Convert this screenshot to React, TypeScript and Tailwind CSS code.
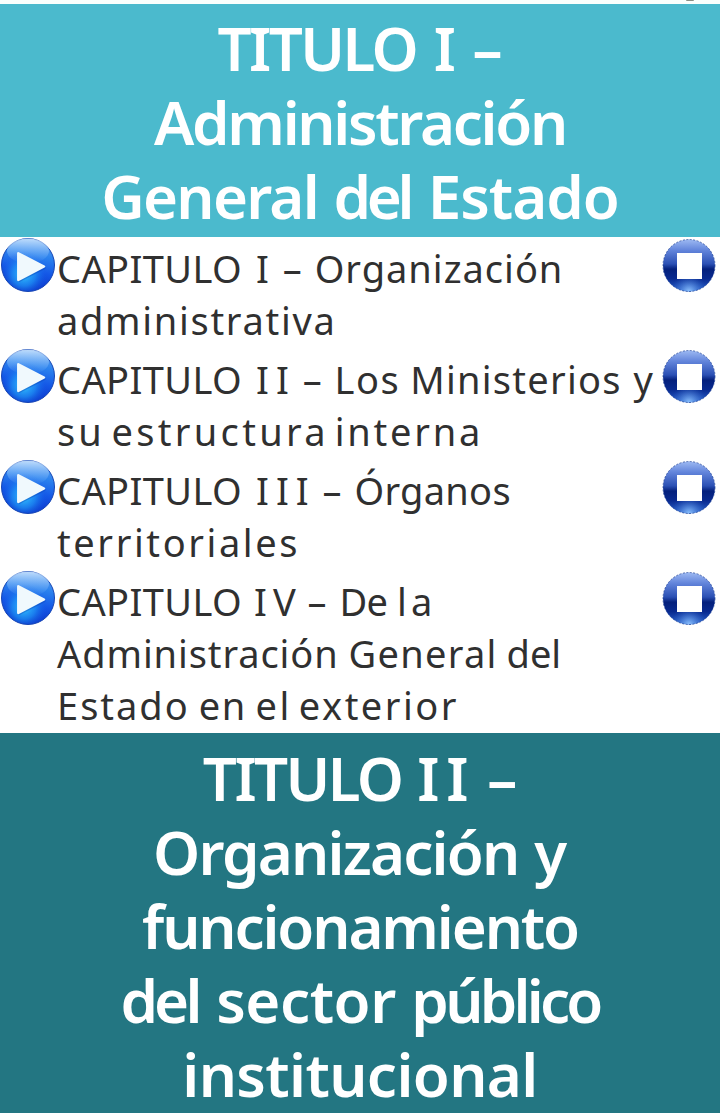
interface Word {
  text: string
  className?: string
}

type Line = Word[]

const titleOne: Line[] = [
  [
    { text: 'TITULO', className: 'tracking-[-2.57px]' },
    { text: 'I', className: 'ml-0.5' },
    { text: '–', className: 'ml-px' },
  ],
  [{ text: 'Administración', className: 'tracking-[-2.29px]' }],
  [
    { text: 'General', className: 'tracking-[-1.75px]' },
    { text: 'del', className: 'tracking-[-4.33px]' },
    { text: 'Estado', className: 'ml-0.5 tracking-[-1.02px]' },
  ],
]

const titleTwo: Line[] = [
  [
    { text: 'TITULO', className: 'tracking-[-2.57px]' },
    { text: 'II', className: 'tracking-[7px]' },
    { text: '–', className: '-ml-[4px]' },
  ],
  [
    { text: 'Organización', className: 'tracking-[-1.8px]' },
    { text: 'y' },
  ],
  [{ text: 'funcionamiento', className: 'tracking-[-2.13px]' }],
  [
    { text: 'del', className: 'tracking-[-3.83px]' },
    { text: 'sector', className: 'ml-0.5 tracking-[-0.44px]' },
    { text: 'público', className: 'tracking-[-3.75px]' },
  ],
  [{ text: 'institucional', className: 'tracking-[-0.6px]' }],
]

const chapters: Line[][] = [
  [
    [
      { text: 'CAPITULO', className: 'tracking-[0.4px]' },
      { text: 'I', className: 'ml-1' },
      { text: '–', className: 'ml-1' },
      { text: 'Organización', className: 'ml-[3px] tracking-[1px]' },
    ],
    [{ text: 'administrativa', className: 'tracking-[1.7px]' }],
  ],
  [
    [
      { text: 'CAPITULO', className: 'tracking-[0.4px]' },
      { text: 'II', className: 'ml-1 tracking-[7px]' },
      { text: '–', className: '-ml-[3px]' },
      { text: 'Los', className: 'ml-[3px] tracking-[1.55px]' },
      { text: 'Ministerios', className: 'tracking-[1.26px]' },
      { text: 'y', className: 'ml-0.5' },
    ],
    [
      { text: 'su', className: 'tracking-[3px]' },
      { text: 'estructura', className: '-ml-[3px] tracking-[3.3px]' },
      { text: 'interna', className: '-ml-[4px] tracking-[2.8px]' },
    ],
  ],
  [
    [
      { text: 'CAPITULO', className: 'tracking-[0.4px]' },
      { text: 'III', className: 'ml-1 tracking-[7px]' },
      { text: '–', className: '-ml-[3px]' },
      { text: 'Órganos', className: 'ml-[3px] tracking-[0.3px]' },
    ],
    [{ text: 'territoriales', className: 'tracking-[2.6px]' }],
  ],
  [
    [
      { text: 'CAPITULO', className: 'tracking-[0.4px]' },
      { text: 'IV', className: 'ml-0.5 tracking-[6px]' },
      { text: '–', className: '-ml-1' },
      { text: 'De', className: 'ml-[3px] tracking-[-0.74px]' },
      { text: 'la', className: 'tracking-[4px]' },
    ],
    [
      { text: 'Administración', className: 'tracking-[0.9px]' },
      { text: 'General', className: 'tracking-[1.3px]' },
      { text: 'del', className: '-ml-px' },
    ],
    [
      { text: 'Estado', className: 'tracking-[2px]' },
      { text: 'en', className: '-ml-px tracking-[1.57px]' },
      { text: 'el', className: '-ml-px tracking-[2.57px]' },
      { text: 'exterior', className: '-ml-[3px] tracking-[2.5px]' },
    ],
  ],
]

function Lines({ lines }: { lines: Line[] }) {
  return (
    <>
      {lines.map((line, lineIndex) => (
        <span key={lineIndex} className="block whitespace-nowrap">
          {line.map((word, wordIndex) => (
            <span key={wordIndex}>
              {wordIndex > 0 && ' '}
              <span className={word.className}>{word.text}</span>
            </span>
          ))}
        </span>
      ))}
    </>
  )
}

function PlayIcon() {
  return (
    <svg width="56" height="56" viewBox="0 0 56 56" className="block">
      <defs>
        <linearGradient id="play-base" x1="0.6" y1="0" x2="0.4" y2="1">
          <stop offset="0" stopColor="#5f9fee" />
          <stop offset="0.3" stopColor="#2b82ee" />
          <stop offset="0.6" stopColor="#1457e6" />
          <stop offset="1" stopColor="#0a2fc4" />
        </linearGradient>
        <radialGradient id="play-glow" cx="0.42" cy="0.68" r="0.45">
          <stop offset="0" stopColor="#35c8ff" />
          <stop offset="0.5" stopColor="#1f97f8" stopOpacity="0.7" />
          <stop offset="1" stopColor="#1457e6" stopOpacity="0" />
        </radialGradient>
        <linearGradient id="play-shine" x1="0" y1="0" x2="0" y2="1">
          <stop offset="0" stopColor="#d9edff" stopOpacity="0.8" />
          <stop offset="1" stopColor="#7fbdff" stopOpacity="0" />
        </linearGradient>
      </defs>
      <circle cx="28" cy="28" r="26.5" fill="url(#play-base)" stroke="#1746b4" />
      <circle cx="28" cy="28" r="26" fill="url(#play-glow)" />
      <ellipse cx="28" cy="14" rx="21" ry="12.5" fill="url(#play-shine)" />
      <path d="M19 18 L44.5 31 L19 44 Z" fill="#0b3fb5" opacity="0.4" stroke="#0b3fb5" strokeWidth="2" strokeLinejoin="round" />
      <path d="M18.3 16.3 L44 29.5 L18.3 43 Z" fill="#f0f9fd" stroke="#f0f9fd" strokeWidth="2.5" strokeLinejoin="round" />
    </svg>
  )
}

function StopIcon() {
  return (
    <svg width="54" height="54" viewBox="0 0 54 54" className="block">
      <defs>
        <linearGradient id="stop-base" x1="0" y1="0" x2="0" y2="1">
          <stop offset="0" stopColor="#9db9f2" />
          <stop offset="0.2" stopColor="#6486dc" />
          <stop offset="0.47" stopColor="#2b50b4" />
          <stop offset="0.57" stopColor="#04207c" />
          <stop offset="0.75" stopColor="#08298f" />
          <stop offset="1" stopColor="#2a62cc" />
        </linearGradient>
        <radialGradient id="stop-glow" cx="0.5" cy="1" r="0.35">
          <stop offset="0" stopColor="#8fc4ff" />
          <stop offset="1" stopColor="#2a62cc" stopOpacity="0" />
        </radialGradient>
      </defs>
      <circle cx="27" cy="26.5" r="26" fill="url(#stop-base)" />
      <circle cx="27" cy="26.5" r="26" fill="url(#stop-glow)" />
      <circle cx="27" cy="26.5" r="26" fill="none" stroke="#1b3f94" strokeOpacity="0.7" strokeDasharray="2 1.5" />
      <rect x="15" y="14" width="25" height="26" fill="#fff" />
    </svg>
  )
}

export default function App() {
  return (
    <main className="flex h-[1113px] w-[720px] flex-col overflow-hidden bg-white font-['Noto_Sans',sans-serif]">
      {/* Bottom edge of the row above */}
      <div className="flex h-1 shrink-0 justify-end bg-[#fafffd] pr-[26px]">
        <div className="h-px w-2 rounded-b-full bg-[#8a8f86]" />
      </div>

      <h2 className="h-[233px] shrink-0 bg-[#4bbacd] pt-[7px] text-center text-[60px] leading-[74px] font-semibold text-white">
        <Lines lines={titleOne} />
      </h2>

      <ul className="shrink-0">
        {chapters.map((lines, index) => (
          <li key={index} className="flex items-start text-[38px] leading-[52px] text-[#303030]">
            <button type="button" aria-label="Reproducir" className="w-[57px] shrink-0">
              <PlayIcon />
            </button>
            <div className="min-w-0 flex-1 pt-[5px] pb-0.5">
              <Lines lines={lines} />
            </div>
            <button type="button" aria-label="Detener" className="mt-0.5 mr-1 shrink-0">
              <StopIcon />
            </button>
          </li>
        ))}
      </ul>

      <h2 className="flex-1 bg-[#237682] pt-2 text-center text-[60px] leading-[74px] font-semibold text-white">
        <Lines lines={titleTwo} />
      </h2>
    </main>
  )
}
